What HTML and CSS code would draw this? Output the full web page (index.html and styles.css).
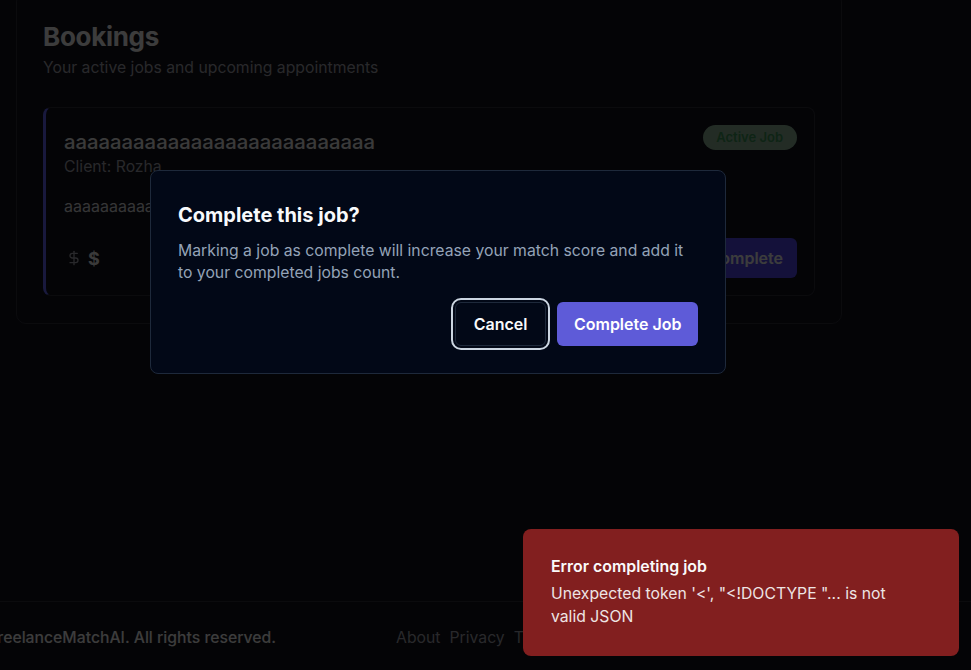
FILE: index.html
```html
<!DOCTYPE html>
<html lang="en">
<head>
<meta charset="utf-8">
<title>Bookings</title>
<link rel="stylesheet" href="styles.css">
</head>
<body>
  <main class="main">
    <section class="panel">
      <h1 class="panel-title">Bookings</h1>
      <p class="panel-sub">Your active jobs and upcoming appointments</p>

      <article class="booking">
        <div class="booking-head">
          <div>
            <h2 class="booking-title">aaaaaaaaaaaaaaaaaaaaaaaaaaa</h2>
            <p class="booking-client">Client: Rozha</p>
          </div>
          <span class="badge">Active Job</span>
        </div>
        <p class="booking-desc">aaaaaaaaaaaaaaaaaa</p>
        <div class="booking-foot">
          <div class="price">
            <svg class="price-icon" viewBox="0 0 24 24" fill="none" stroke="currentColor" stroke-width="2" stroke-linecap="round" stroke-linejoin="round"><line x1="12" x2="12" y1="2" y2="22"/><path d="M17 5H9.5a3.5 3.5 0 0 0 0 7h5a3.5 3.5 0 0 1 0 7H6"/></svg>
            <span class="price-val">$</span>
          </div>
          <button class="btn-mark">Complete</button>
        </div>
      </article>
    </section>
  </main>

  <footer class="footer">
    <div class="footer-inner">
      <span class="copy">© 2024 FreelanceMatchAI. All rights reserved.</span>
      <nav class="links">
        <a href="#">About</a>
        <a href="#">Privacy</a>
        <a href="#">Terms</a>
        <a href="#">Contact</a>
      </nav>
    </div>
  </footer>

  <div class="overlay"></div>

  <div class="dialog" role="alertdialog">
    <h2 class="dialog-title">Complete this job?</h2>
    <p class="dialog-desc">Marking a job as complete will increase your match score and add it to your completed jobs count.</p>
    <div class="dialog-actions">
      <button class="btn btn-cancel">Cancel</button>
      <button class="btn btn-primary">Complete Job</button>
    </div>
  </div>

  <div class="toast" role="status">
    <div class="toast-title">Error completing job</div>
    <div class="toast-desc">Unexpected token '&lt;', "&lt;!DOCTYPE "... is not valid JSON</div>
  </div>
</body>
</html>
```

FILE: styles.css
```css
* { box-sizing: border-box; }

html, body {
  margin: 0;
  padding: 0;
}

body {
  background: #101018;
  color: #f5f5f5;
  font-family: Inter, "Noto Sans", "Liberation Sans", sans-serif;
  min-height: 100vh;
  display: flex;
  flex-direction: column;
  overflow: hidden;
}

.main {
  flex: 1;
  padding: 0 130px 0 16px;
}

.panel {
  width: 826px;
  margin-top: -8px;
  border: 1px solid #2c2c36;
  border-radius: 10px;
  padding: 28px 26px 27px 26px;
}

.panel-title {
  margin: 0;
  font-size: 26px;
  line-height: 32px;
  font-weight: 700;
  letter-spacing: -0.3px;
  color: #f0f0f0;
}

.panel-sub {
  margin: 3px 0 0;
  font-size: 15.75px;
  line-height: 24px;
  color: #a1a1aa;
}

.booking {
  margin-top: 27px;
  border: 1px solid #2c2c36;
  border-left: 3px solid #6366f1;
  border-radius: 8px;
  padding: 19px 17px 17px 18px;
}

.booking-head {
  display: flex;
  justify-content: space-between;
  align-items: flex-start;
}

.booking-title {
  margin: 0;
  font-size: 20.3px;
  line-height: 29px;
  font-weight: 500;
  color: #e8e8e8;
}

.booking-client {
  margin: 0;
  font-size: 15.75px;
  line-height: 22px;
  color: #a1a1aa;
}

.badge {
  margin-top: -2px;
  padding: 3px 14px 3px 13px;
  border-radius: 999px;
  background: #8ab095;
  color: #3a8f53;
  font-size: 13px;
  line-height: 19px;
  font-weight: 600;
}

.booking-desc {
  margin: 16px 0 0;
  font-size: 16px;
  line-height: 24px;
  color: #d4d4d8;
}

.booking-foot {
  margin-top: 20px;
  display: flex;
  justify-content: space-between;
  align-items: center;
}

.price {
  display: flex;
  align-items: center;
  gap: 6px;
  padding-left: 2px;
}

.price-icon {
  width: 16px;
  height: 18px;
  color: #a1a1aa;
}

.price-val {
  font-size: 18px;
  font-weight: 700;
  color: #e8e8e8;
}

.btn-mark {
  height: 40px;
  padding: 0 14px 0 34px;
  border: 0;
  border-radius: 6px;
  background: #4f46e5;
  color: #f0f0f0;
  font-family: inherit;
  font-size: 16px;
  font-weight: 600;
}

.footer {
  border-top: 1px solid #2c2c36;
  padding: 24px 0 20px;
}

.footer-inner {
  display: flex;
  align-items: center;
  margin-left: -74px;
}

.copy {
  font-size: 15.75px;
  line-height: 24px;
  font-weight: 500;
  color: #f0f0f0;
  white-space: nowrap;
}

.links {
  display: flex;
  gap: 9px;
  margin-left: 120px;
}

.links a {
  font-size: 15.75px;
  line-height: 24px;
  color: #a1a1aa;
  text-decoration: none;
}

.overlay {
  position: fixed;
  inset: 0;
  background: rgba(0, 0, 0, 0.75);
}

.dialog {
  position: absolute;
  left: 150px;
  top: 170px;
  width: 576px;
  background: #020817;
  border: 1px solid #1e293b;
  border-radius: 8px;
  padding: 30px 27px 27px 27px;
}

.dialog-title {
  margin: 0;
  font-size: 20px;
  line-height: 28px;
  font-weight: 700;
  color: #f8fafc;
}

.dialog-desc {
  margin: 11px 0 0;
  font-size: 15.75px;
  line-height: 22px;
  color: #94a3b8;
}

.dialog-actions {
  margin-top: 18px;
  display: flex;
  justify-content: flex-end;
  gap: 11px;
}

.btn {
  height: 44px;
  padding: 0 18px;
  border-radius: 6px;
  font-family: inherit;
  font-size: 16px;
  font-weight: 600;
  cursor: pointer;
}

.btn-cancel {
  background: #020817;
  color: #f8fafc;
  border: 1px solid #1e293b;
  outline: 2px solid #cbd5e1;
  outline-offset: 2px;
  padding: 0 18px;
}

.btn-primary {
  background: #5e5bd8;
  color: #ffffff;
  border: 0;
  padding: 0 16.5px;
}

.toast {
  position: fixed;
  right: 12px;
  bottom: 14px;
  width: 436px;
  background: #821f1f;
  border-radius: 8px;
  padding: 27px 56px 28px 28px;
  color: #fafafa;
}

.toast-title {
  font-size: 15.9px;
  line-height: 22px;
  font-weight: 600;
}

.toast-desc {
  margin-top: 4px;
  font-size: 15.75px;
  line-height: 23px;
  opacity: 0.9;
}
```
